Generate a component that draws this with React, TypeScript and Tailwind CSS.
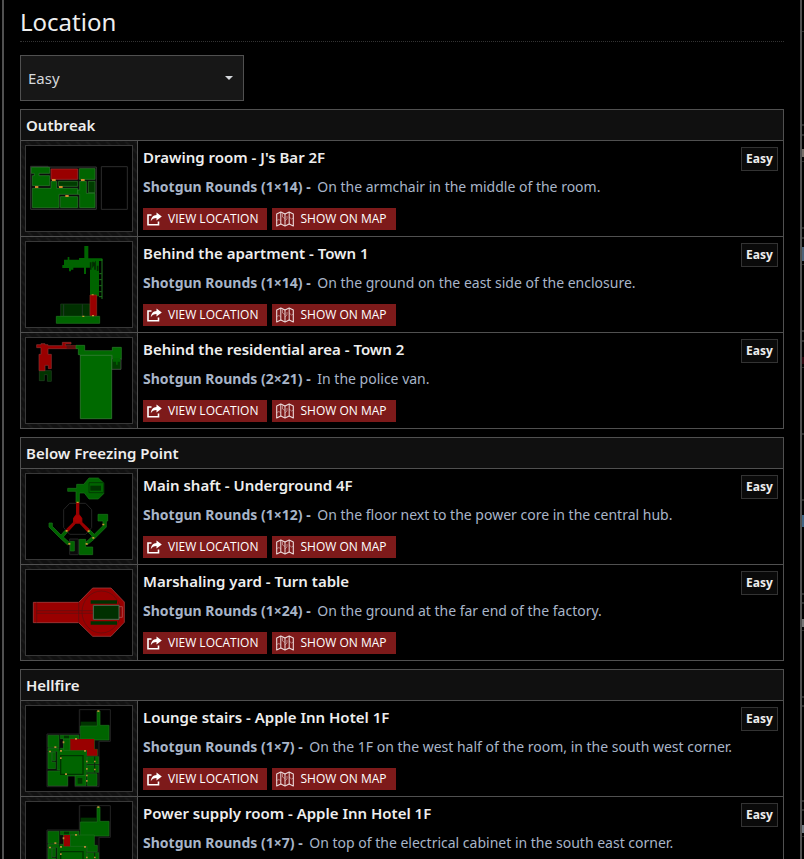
import { ReactNode } from 'react';

type Place = {
    title: string;
    amount: string;
    note: string;
    map: ReactNode;
};

type Scenario = {
    name: string;
    places: Place[];
};

const MapFrame = ({ top, children }: { top: number; children: ReactNode }) => (
    <svg
        viewBox={`33 ${top} 318 255`}
        className="block h-[85px] w-full"
        preserveAspectRatio="xMidYMid meet"
        aria-hidden="true"
    >
        {children}
    </svg>
);

const BarMap = () => (
    <MapFrame top={36}>
        <path d="M47 97H99V99H244V226H47Z" fill="#0c0c0c" stroke="#343434" strokeWidth="3" />
        <path d="M259 98H337V226H259Z" fill="none" stroke="#2c2c2c" strokeWidth="3" />
        <g fill="#006400" stroke="#2e7d2e" strokeWidth="2">
            <path d="M49 100H104V118H72V125H104V155H52V125H58V118H49Z" />
            <path d="M52 163H108V142H125V163H188V181H132V221H52Z" />
            <path d="M130 142H188V157H130Z" fill="#003c00" />
            <path d="M136 188H188V221H136Z" />
            <path d="M193 104H240V136H193Z" />
            <path d="M194 142H214V178H240V221H194V181H188V168H194Z" />
            <path d="M220 142H240V176H220Z" fill="#003c00" />
        </g>
        <path d="M108 105H188V136H108Z" fill="#990000" stroke="#a83030" strokeWidth="2" />
        <path d="M111 135h11v6h-11zM198 135h11v6h-11zM60 156h10v6h-10zM132 156h11v6h-11zM151 183h10v6h-10z" fill="#d08a2c" />
    </MapFrame>
);

const ApartmentMap = () => (
    <MapFrame top={21}>
        <path d="M137 207H225V244H137Z" fill="#003000" stroke="#1c3a1c" strokeWidth="2" />
        <path d="M146 208V243M202 208V243" stroke="#33403a" strokeWidth="2" />
        <g fill="#006400">
            <path d="M208 33H220V70H262V78H252V184H225V98H213V117H207V98H175V104H168V109H162V99H142V90H147V74H158V66H163V74H192V69H208Z" />
            <path d="M124 244H254V265H124Z" stroke="#1f7a1f" strokeWidth="2" />
        </g>
        <path d="M227 82V104M234 80V92L240 84V104M248 92V108" stroke="#002c00" strokeWidth="5" fill="none" />
        <path d="M261 72V192M253 116H260M253 134H260M253 152H260M253 170H260M252 185H261" stroke="#1f741f" strokeWidth="3" fill="none" />
        <path d="M225 180H245V242H225Z" fill="#990000" stroke="#8f2a1e" strokeWidth="2" />
        <path d="M230 178h6v3h-6zM231 240h6v4h-6zM202 242h6v4h-6z" fill="#c99a2e" />
    </MapFrame>
);

const ResidentialMap = () => (
    <MapFrame top={24}>
        <path d="M73 122H109V154H97V134H88V152H73Z" fill="#003400" stroke="#234523" strokeWidth="2" />
        <path d="M65 44H78V41H90V44H99V47H142V37H168V42H151V47H184V56H99V73H109V116H100V106H90V122H72V73H78V53H65Z" fill="#990000" stroke="#8c3434" strokeWidth="2" />
        <path d="M155 47H184V56H155Z" fill="#5c1010" />
        <path d="M183 46H209V62H292V52H319V88H292V76H195V74H190V56H183Z" fill="#006a00" stroke="#2c7a2c" strokeWidth="2" />
        <path d="M290 86H318V118H290Z" fill="#003c00" stroke="#595959" strokeWidth="2" />
        <path d="M293 84H316V95H308V104H303V95H293Z" fill="#006400" />
        <path d="M196 76H290V266H196Z" fill="#006a00" stroke="#3d873d" strokeWidth="2" />
    </MapFrame>
);

const ShaftMap = () => (
    <MapFrame top={27}>
        <path d="M164 115H212L230 134V188L212 208H164L146 188V134Z" fill="none" stroke="#242424" strokeWidth="3" />
        <path d="M164 222H190V269H164Z" fill="#0a0a0a" stroke="#242424" strokeWidth="3" />
        <g fill="#006400" stroke="#1c741c" strokeWidth="2">
            <path d="M158 70H185V58H206L222 39H250L266 54V86L250 102H222L208 84H193V112H183V79H158Z" />
            <path d="M102 174H112V184L138 210L150 196L157 202L145 216L164 233L158 240L134 218L102 186Z" />
            <path d="M249 148H278V168H274V186L238 222L216 240L210 234L232 214L218 200L224 194L238 208L264 182V168H249Z" />
            <path d="M166 229H178V258H166Z" />
            <path d="M193 223H212V246H233V269H193Z" />
        </g>
        <path d="M222 53H266V83H222Z" fill="none" stroke="#003c00" strokeWidth="3" />
        <path d="M226 62H258V77H226Z" fill="#003400" />
        <path d="M183 112H193V148L202 160V172L224 193L217 201L194 176H182L160 200L153 193L174 172V160L183 148Z" fill="#990000" />
        <circle cx="188" cy="162" r="11" fill="#a80000" />
        <path d="M185 110h6v4h-6zM152 195h6v5h-6zM218 196h6v5h-6zM262 176h6v5h-6zM232 216h6v5h-6zM160 234h6v5h-6zM212 234h6v5h-6z" fill="#c99a2e" />
    </MapFrame>
);

const TurntableMap = () => (
    <MapFrame top={21}>
        <path d="M55 118H191L233 75H288L328 117V178L288 220H233L191 179H55Z" fill="#990000" stroke="#b04848" strokeWidth="2" />
        <g fill="none" stroke="#591010" strokeWidth="2">
            <path d="M65 118V179M191 118V179M65 143H235M65 151H235" />
            <ellipse cx="259" cy="147" rx="58" ry="63" />
        </g>
        <path d="M227 112H306V122H227ZM227 175H306V185H227Z" fill="#003000" />
        <path d="M235 127H312V169H235Z" fill="#003000" stroke="#4d6a52" strokeWidth="3" />
        <path d="M312 131H322V163H312" fill="none" stroke="#b06060" strokeWidth="2" />
    </MapFrame>
);

const HotelMap = ({ room }: { room: 'lounge' | 'power' }) => (
    <MapFrame top={24}>
        <path d="M193 35H286V130H252V266H180V232H158V266H96V108H193Z" fill="#090909" stroke="#242424" strokeWidth="3" />
        <path d="M197 37H284V82H197Z" fill="#000" />
        <path d="M197 71H244V84H197Z" fill="#003400" />
        <g fill="#006400" stroke="#1c701c" strokeWidth="2">
            <path d="M246 39H255V82H282V126H196V84H246Z" />
            <path d="M99 112H132V148H99Z" />
            <path d="M135 112H192V122H164V157H214V234H138V216H127V160H99V151H146V122H135Z" />
            <path d="M99 162H110V192H122V212H99Z" />
            <path d="M112 162H122V188H112Z" />
            <path d="M99 219H158V263H99Z" />
            <path d="M181 232H213V263H181Z" />
            <path d="M216 176H251V198H216ZM216 202H251V223H216ZM217 227H246V263H217Z" />
            <path d="M166 123H238V154H247V173H216V157H166Z" />
            <path d="M146 123H165V157H146Z" />
        </g>
        <path d="M137 173H204V229H137Z" fill="#006400" stroke="#003400" strokeWidth="4" />
        <path d="M147 113H162V121H147ZM188 240H202V257H188Z" fill="#003400" />
        <path d="M134 112V158M239 176V223M124 162V216" stroke="#0c240c" strokeWidth="3" />
        {room === 'lounge' ? (
            <path d="M166 123H238V154H247V173H216V157H166Z" fill="#990000" />
        ) : (
            <path d="M146 123H165V157H146Z" fill="#990000" />
        )}
        <path
            d="M247 37h6v5h-6zM180 120h6v5h-6zM143 130h5v6h-5zM118 145h6v5h-6zM102 158h6v5h-6zM135 156h6v5h-6zM207 156h6v5h-6zM135 178h5v5h-5zM213 188h5v5h-5zM237 188h5v5h-5zM213 210h5v5h-5zM237 212h5v5h-5zM150 226h6v5h-6zM213 230h5v5h-5zM213 246h5v5h-5z"
            fill="#b58a35"
        />
    </MapFrame>
);

const ShareIcon = () => (
    <svg viewBox="0 0 15 14" className="h-[14px] w-[15px] shrink-0" aria-hidden="true">
        <path d="M4.500 3H1V12.800H11.500V9.500" fill="none" stroke="#fff" strokeWidth="1.6" />
        <path d="M9.500 .5L14.800 4.500L9.500 8.500V6C6.800 6 5.200 6.800 3.800 9.300C4.100 5.600 6.100 3.200 9.500 3Z" fill="#fff" />
    </svg>
);

const FoldedMapIcon = () => (
    <svg viewBox="0 0 18 16" className="h-4 w-[18px] shrink-0" fill="none" stroke="#ecdcdc" strokeLinejoin="round" aria-hidden="true">
        <path d="M.7 3L4.800 1L9 3L13.200 1L17.300 3V15L13.200 13L9 15L4.800 13L.7 15Z" strokeWidth="1.1" />
        <path d="M4.800 1V13M9 3V15M13.200 1V13" strokeWidth="1" />
        <path d="M.7 9.500L3 8.500L4.800 10M6.500 2.500V6L9 7.500M9 10L11 8V5M13.200 6L15.500 8L17.300 7" strokeWidth=".7" opacity=".7" />
    </svg>
);

const scenarios: Scenario[] = [
    {
        name: 'Outbreak',
        places: [
            { title: "Drawing room - J's Bar 2F", amount: '1×14', note: 'On the armchair in the middle of the room.', map: <BarMap /> },
            { title: 'Behind the apartment - Town 1', amount: '1×14', note: 'On the ground on the east side of the enclosure.', map: <ApartmentMap /> },
            { title: 'Behind the residential area - Town 2', amount: '2×21', note: 'In the police van.', map: <ResidentialMap /> }
        ]
    },
    {
        name: 'Below Freezing Point',
        places: [
            { title: 'Main shaft - Underground 4F', amount: '1×12', note: 'On the floor next to the power core in the central hub.', map: <ShaftMap /> },
            { title: 'Marshaling yard - Turn table', amount: '1×24', note: 'On the ground at the far end of the factory.', map: <TurntableMap /> }
        ]
    },
    {
        name: 'Hellfire',
        places: [
            { title: 'Lounge stairs - Apple Inn Hotel 1F', amount: '1×7', note: 'On the 1F on the west half of the room, in the south west corner.', map: <HotelMap room="lounge" /> },
            { title: 'Power supply room - Apple Inn Hotel 1F', amount: '1×7', note: 'On top of the electrical cabinet in the south east corner.', map: <HotelMap room="power" /> }
        ]
    }
];

// Edge of the list behind the panel: space above, height, colour
const edgeMarks: [number, number, string][] = [
    [31, 1, '#2c2c2c'],
    [92, 2, '#2c2c2c'],
    [8, 2, '#2c2c2c'],
    [13, 8, '#77706a'],
    [4, 1, '#2c2c2c'],
    [65, 2, '#2c2c2c'],
    [8, 2, '#2c2c2c'],
    [8, 14, '#4b6178'],
    [3, 1, '#2c2c2c'],
    [65, 2, '#2c2c2c'],
    [8, 2, '#2c2c2c'],
    [15, 7, '#30060f'],
    [3, 1, '#2c2c2c'],
    [65, 2, '#2c2c2c'],
    [64, 2, '#2c2c2c'],
    [14, 12, '#3f6484'],
    [66, 2, '#2c2c2c'],
    [7, 2, '#2c2c2c'],
    [15, 8, '#777777'],
    [3, 1, '#2c2c2c'],
    [65, 2, '#2c2c2c'],
    [7, 2, '#2c2c2c'],
    [93, 2, '#2c2c2c'],
    [7, 2, '#2c2c2c'],
    [14, 8, '#6f7880'],
    [3, 1, '#2c2c2c']
];

const ActionButton = ({ icon, label }: { icon: ReactNode; label: string }) => (
    <button type="button" className="flex h-[22px] items-center gap-[6px] bg-[#7d1a1a] pr-[9px] pl-1 font-['Open_Sans','Noto_Sans',sans-serif] text-xs whitespace-nowrap text-white hover:bg-[#992020]">
        {icon}
        {label}
    </button>
);

const PlaceRow = ({ place }: { place: Place }) => (
    <tr>
        <td className="h-24 w-[117px] border border-[#505050] bg-[#121212] bg-[repeating-linear-gradient(45deg,#181818_0_2px,#101010_2px_7px)] p-1">
            <div className="border border-[#383838] bg-black">{place.map}</div>
        </td>
        <td className="h-24 border border-[#505050] p-0 align-top">
            <div className="flex items-start justify-between pt-[6px] pr-[5px] pl-[5px]">
                <div>
                    <h3 className="text-[15px] leading-5 font-semibold text-[#eeeeee]">{place.title}</h3>
                    <p className="mt-[9px] text-sm leading-[22px] text-[#a8b5c8]">
                        <b className="mr-[3px] font-bold">Shotgun Rounds ({place.amount}) - </b>
                        {place.note}
                    </p>
                    <div className="mt-[10px] flex gap-[5px]">
                        <ActionButton icon={<ShareIcon />} label="VIEW LOCATION" />
                        <ActionButton icon={<FoldedMapIcon />} label="SHOW ON MAP" />
                    </div>
                </div>
                <span className="flex h-6 w-[37px] items-center justify-center border border-[#333333] bg-[#0a0a0a] font-['Open_Sans','Noto_Sans',sans-serif] text-xs font-bold text-[#eeeeee]">Easy</span>
            </div>
        </td>
    </tr>
);

const App = () => (
    <div className="flex min-h-screen bg-black pl-[2px] font-['Noto_Sans','Open_Sans',sans-serif] text-[#eeeeee]">
        <main className="min-w-0 flex-1 border-x-2 border-[#505050] px-4">
            <h1 className="border-b border-dotted border-[#333333] pt-1 pb-[1px] text-2xl leading-9">Location</h1>
            <div className="relative mt-[13px] w-56">
                <select
                    aria-label="Difficulty"
                    defaultValue="Easy"
                    className="h-[46px] w-full appearance-none border border-[#505050] bg-[#171717] px-[7px] text-[15px] text-[#d5d8dc]"
                >
                    <option>Easy</option>
                    <option>Normal</option>
                    <option>Hard</option>
                    <option>Very Hard</option>
                </select>
                <svg viewBox="0 0 8 4" className="pointer-events-none absolute top-[21px] right-[11px] h-1 w-2" aria-hidden="true">
                    <path d="M0 0H8L4 4Z" fill="#d5d8dc" />
                </svg>
            </div>
            <div className="mt-2 flex flex-col gap-2">
                {scenarios.map((scenario) => (
                    <table key={scenario.name} className="w-full border-collapse">
                        <thead>
                            <tr>
                                <th colSpan={2} className="h-[31px] border border-[#505050] bg-[#101010] px-[5px] py-0 text-left text-[15px] leading-5 font-semibold">
                                    {scenario.name}
                                </th>
                            </tr>
                        </thead>
                        <tbody>
                            {scenario.places.map((place) => (
                                <PlaceRow key={place.title} place={place} />
                            ))}
                        </tbody>
                    </table>
                ))}
            </div>
        </main>
        <div className="w-[2px] shrink-0" aria-hidden="true">
            {edgeMarks.map(([space, height, color], i) => (
                <div key={i} style={{ marginTop: space, height, backgroundColor: color }} />
            ))}
        </div>
    </div>
);

export default App;
